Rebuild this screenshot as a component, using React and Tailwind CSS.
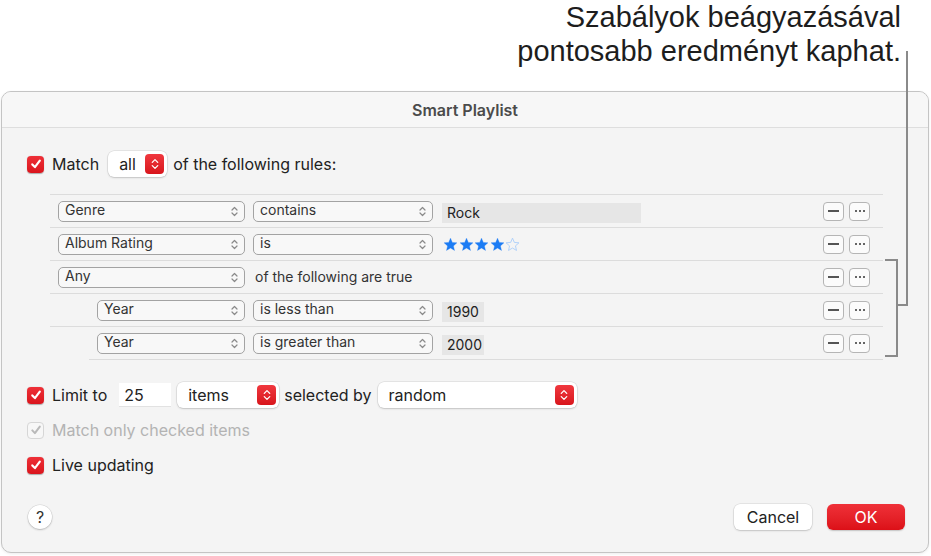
import React from 'react';

const RED_STEP = 'bg-gradient-to-b from-[#f0373e] to-[#d8141b]';

function Check({ disabled = false }) {
  if (disabled) {
    return (
      <div className="w-[17px] h-[17px] rounded-[4px] border border-[#d6d6d6] bg-[#f7f7f7] flex items-center justify-center shrink-0">
        <svg width="12" height="12" viewBox="0 0 12 12">
          <path d="M2.3 6.4 L4.9 9.1 L9.8 2.6" fill="none" stroke="#b9b9b9" strokeWidth="2" strokeLinecap="round" strokeLinejoin="round" />
        </svg>
      </div>
    );
  }
  return (
    <div className="w-[17px] h-[17px] rounded-[4px] bg-gradient-to-b from-[#ee2f37] to-[#da141c] flex items-center justify-center shrink-0 shadow-[0_0.5px_1px_rgba(0,0,0,0.3)]">
      <svg width="12" height="12" viewBox="0 0 12 12">
        <path d="M2.3 6.4 L4.9 9.1 L9.8 2.6" fill="none" stroke="#fff" strokeWidth="2.2" strokeLinecap="round" strokeLinejoin="round" />
      </svg>
    </div>
  );
}

function Chevrons({ color = '#8a8a8a', w = 7, h = 11 }) {
  return (
    <svg width={w} height={h} viewBox="0 0 7 11">
      <path d="M1 4 L3.5 1.5 L6 4 M1 7 L3.5 9.5 L6 7" fill="none" stroke={color} strokeWidth="1.2" strokeLinecap="round" strokeLinejoin="round" />
    </svg>
  );
}

// popup used in the rule rows (thin outlined)
function RulePopup({ label, width }) {
  return (
    <div
      className={`h-[21px] ${width} shrink-0 rounded-[5px] border border-[#a3a3a3] bg-[#f8f8f8] flex items-center justify-between pl-[6px] pr-[6px] text-[14px] text-[#333]`}
    >
      <span className="leading-none -mt-[2px]">{label}</span>
      <Chevrons />
    </div>
  );
}

// big white popup with red stepper
function RedPopup({ label, width }) {
  return (
    <div
      className={`h-[26px] ${width} shrink-0 rounded-[6px] bg-white shadow-[0_0_0_0.5px_rgba(0,0,0,0.12),0_1px_2px_rgba(0,0,0,0.15)] flex items-center justify-between pl-[11px] pr-[3px] text-[16px] text-[#222]`}
    >
      <span>{label}</span>
      <div className={`w-[19px] h-[20px] rounded-[4px] ${RED_STEP} flex items-center justify-center`}>
        <Chevrons color="#fff" w={8} h={12} />
      </div>
    </div>
  );
}

function SmallButtons() {
  return (
    <div className="flex gap-[5px] ml-auto">
      <div className="w-[21px] h-[19px] rounded-[4px] border border-[#b5b5b5] bg-[#fbfbfb] flex items-center justify-center">
        <div className="w-[11px] h-[1.5px] bg-[#555]" />
      </div>
      <div className="w-[21px] h-[19px] rounded-[4px] border border-[#b5b5b5] bg-[#fbfbfb] flex items-center justify-center gap-[2px]">
        <div className="w-[2px] h-[2px] rounded-full bg-[#333]" />
        <div className="w-[2px] h-[2px] rounded-full bg-[#333]" />
        <div className="w-[2px] h-[2px] rounded-full bg-[#333]" />
      </div>
    </div>
  );
}

function Star({ filled }) {
  return (
    <svg width="15" height="15" viewBox="0 0 24 24">
      <path
        d="M12 1.8 L14.9 8.6 L22.3 9.3 L16.7 14.2 L18.4 21.5 L12 17.6 L5.6 21.5 L7.3 14.2 L1.7 9.3 L9.1 8.6 Z"
        fill={filled ? '#1c7cf4' : 'none'}
        stroke={filled ? '#1c7cf4' : '#a9cdf9'}
        strokeWidth={filled ? 0.5 : 1.4}
        strokeLinejoin="round"
      />
    </svg>
  );
}

function Field({ text, width }) {
  return (
    <div className={`h-[20px] ${width} bg-[#e6e6e6] flex items-center pl-[5px] text-[14px] text-[#222] mt-[3px]`}>
      {text}
    </div>
  );
}

function Row({ children }) {
  return (
    <div className="h-[33px] flex items-center pl-[8px] pr-[13px] border-b border-[#dcdcdc]">
      {children}
      <SmallButtons />
    </div>
  );
}

export default function App() {
  return (
    <div className="relative w-[931px] h-[556px] bg-white overflow-hidden font-['Inter',sans-serif]">
      {/* callout */}
      <div className="h-[91px] pr-[30px] text-right font-['Liberation_Sans',sans-serif] text-[29px] leading-[34px] text-[#1d1d1d]">
        <p>Szabályok beágyazásával</p>
        <p>pontosabb eredményt kaphat.</p>
      </div>

      {/* dialog */}
      <div className="ml-[1px] w-[928px] h-[462px] rounded-[10px] border border-[#c4c4c4] bg-[#f4f4f4] overflow-hidden shadow-[0_1px_3px_rgba(0,0,0,0.08)]">
        <div className="h-[36px] bg-[#f7f7f7] border-b border-[#dedede] flex items-center justify-center text-[16px] font-semibold text-[#4b4b4b]">
          Smart Playlist
        </div>

        <div className="pl-[25px]">
          {/* match row */}
          <div className="mt-[23px] h-[26px] flex items-center text-[16px] text-[#222]">
            <Check />
            <span className="ml-[8px]">Match</span>
            <div className="ml-[9px]">
              <RedPopup label="all" width="w-[59px]" />
            </div>
            <span className="ml-[6px]">of the following rules:</span>
          </div>

          {/* rules */}
          <div className="mt-[17px] ml-[23px] w-[833px] border-t border-[#dcdcdc]">
            <Row>
              <RulePopup label="Genre" width="w-[187px]" />
              <div className="ml-[8px]"><RulePopup label="contains" width="w-[180px]" /></div>
              <div className="ml-[9px]"><Field text="Rock" width="w-[199px]" /></div>
            </Row>
            <Row>
              <RulePopup label="Album Rating" width="w-[187px]" />
              <div className="ml-[8px]"><RulePopup label="is" width="w-[180px]" /></div>
              <div className="ml-[10px] flex gap-[0.5px]">
                <Star filled />
                <Star filled />
                <Star filled />
                <Star filled />
                <Star />
              </div>
            </Row>
            <Row>
              <RulePopup label="Any" width="w-[187px]" />
              <span className="ml-[10px] text-[14px] text-[#333] -mt-[1px]">of the following are true</span>
            </Row>
            <div className="pl-[39px]">
              <Row>
                <RulePopup label="Year" width="w-[148px]" />
                <div className="ml-[8px]"><RulePopup label="is less than" width="w-[180px]" /></div>
                <div className="ml-[9px]"><Field text="1990" width="w-[42px]" /></div>
              </Row>
            </div>
            <div className="pl-[39px] -mt-[1px] border-t border-[#dcdcdc]">
              <Row>
                <RulePopup label="Year" width="w-[148px]" />
                <div className="ml-[8px]"><RulePopup label="is greater than" width="w-[180px]" /></div>
                <div className="ml-[9px]"><Field text="2000" width="w-[42px]" /></div>
              </Row>
            </div>
          </div>

          {/* limit row */}
          <div className="mt-[22px] h-[26px] flex items-center text-[16px] text-[#222]">
            <Check />
            <span className="ml-[8px]">Limit to</span>
            <div className="ml-[12px] w-[52px] h-[24px] bg-white border-b border-[#e2e2e2] flex items-center pl-[5px]">25</div>
            <div className="ml-[6px]">
              <RedPopup label="items" width="w-[102px]" />
            </div>
            <span className="ml-[5px]">selected by</span>
            <div className="ml-[6px]">
              <RedPopup label="random" width="w-[199px]" />
            </div>
          </div>

          <div className="mt-[12px] h-[20px] flex items-center text-[16px] text-[#b3b3b3]">
            <Check disabled />
            <span className="ml-[8px]">Match only checked items</span>
          </div>

          <div className="mt-[15px] h-[20px] flex items-center text-[16px] text-[#222]">
            <Check />
            <span className="ml-[8px]">Live updating</span>
          </div>
        </div>

        {/* bottom buttons */}
        <div className="mt-[29px] pl-[26px] pr-[23px] flex items-center">
          <div className="w-[24px] h-[24px] rounded-full bg-white shadow-[0_0_0_0.5px_rgba(0,0,0,0.12),0_1px_2px_rgba(0,0,0,0.2)] flex items-center justify-center text-[16px] text-[#333]">
            ?
          </div>
          <div className="ml-auto w-[78px] h-[26px] rounded-[6px] bg-white shadow-[0_0_0_0.5px_rgba(0,0,0,0.12),0_1px_2px_rgba(0,0,0,0.15)] flex items-center justify-center text-[16px] text-[#222]">
            Cancel
          </div>
          <div className="ml-[15px] w-[78px] h-[26px] rounded-[6px] bg-gradient-to-b from-[#ef3038] to-[#dc0f17] flex items-center justify-center text-[16px] text-white shadow-[0_1px_1.5px_rgba(0,0,0,0.2)]">
            OK
          </div>
        </div>
      </div>

      {/* callout leader + bracket */}
      <div className="absolute left-[906px] top-[51px] w-[2px] h-[255px] bg-[#8a8a8a]" />
      <div className="absolute left-[896px] top-[304px] w-[12px] h-[2px] bg-[#8a8a8a]" />
      <div className="absolute left-[885px] top-[259px] w-[13px] h-[98px] border-t-2 border-r-2 border-b-2 border-[#8a8a8a]" />
    </div>
  );
}
